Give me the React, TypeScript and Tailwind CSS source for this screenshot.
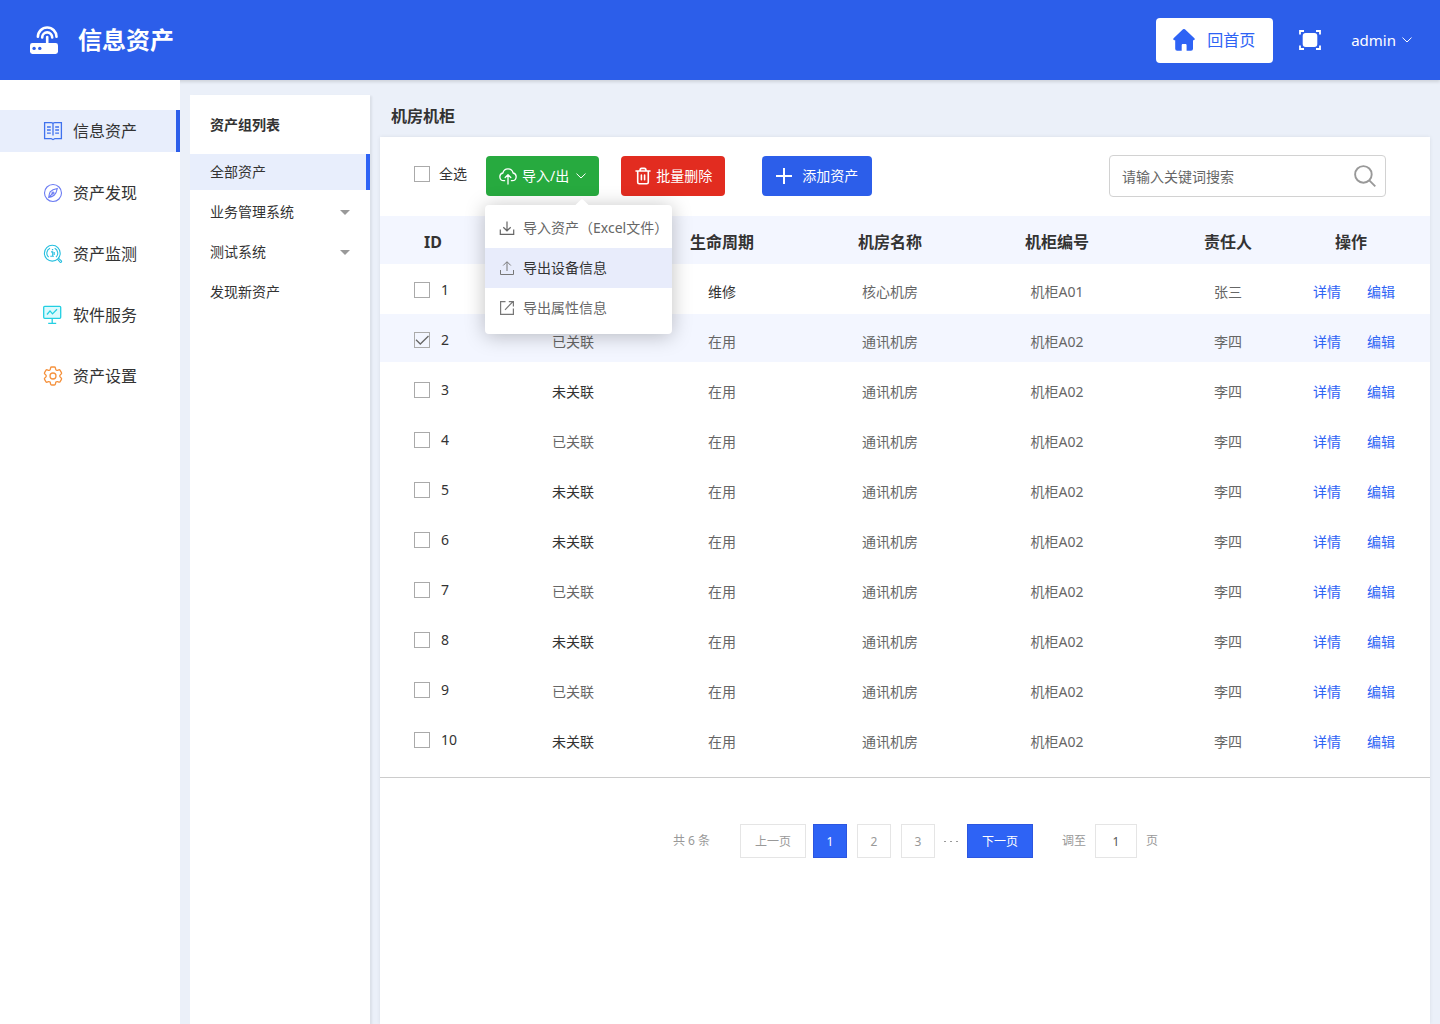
import { useState } from 'react'
import { HiOutlineCog6Tooth } from 'react-icons/hi2'

const menus = [
  { name: '信息资产', icon: BookIcon },
  { name: '资产发现', icon: CompassIcon },
  { name: '资产监测', icon: MonitorSearchIcon },
  { name: '软件服务', icon: ScreenIcon },
  { name: '资产设置', icon: GearIcon },
]

const groups = [
  { name: '全部资产', children: false },
  { name: '业务管理系统', children: true },
  { name: '测试系统', children: true },
  { name: '发现新资产', children: false },
]

const rows = [
  { id: 1, link: '', state: '维修', room: '核心机房', cabinet: '机柜A01', owner: '张三' },
  { id: 2, link: '已关联', state: '在用', room: '通讯机房', cabinet: '机柜A02', owner: '李四' },
  { id: 3, link: '未关联', state: '在用', room: '通讯机房', cabinet: '机柜A02', owner: '李四' },
  { id: 4, link: '已关联', state: '在用', room: '通讯机房', cabinet: '机柜A02', owner: '李四' },
  { id: 5, link: '未关联', state: '在用', room: '通讯机房', cabinet: '机柜A02', owner: '李四' },
  { id: 6, link: '未关联', state: '在用', room: '通讯机房', cabinet: '机柜A02', owner: '李四' },
  { id: 7, link: '已关联', state: '在用', room: '通讯机房', cabinet: '机柜A02', owner: '李四' },
  { id: 8, link: '未关联', state: '在用', room: '通讯机房', cabinet: '机柜A02', owner: '李四' },
  { id: 9, link: '已关联', state: '在用', room: '通讯机房', cabinet: '机柜A02', owner: '李四' },
  { id: 10, link: '未关联', state: '在用', room: '通讯机房', cabinet: '机柜A02', owner: '李四' },
]

function RouterLogo() {
  return (
    <svg className="w-7 h-7" viewBox="0 0 28 28" fill="none" stroke="#fff" strokeWidth="2.6" strokeLinecap="round">
      <path d="M7.900 10.800a9.300 9.300 0 1 1 18.600 0" />
      <path d="M12.200 11.400a5 5 0 1 1 10 0" />
      <path d="M17.200 11v7" />
      <rect x="0" y="17" width="28" height="11" rx="2.400" fill="#fff" stroke="none" />
      <circle cx="4.100" cy="22.400" r="1.700" fill="#2c5eea" stroke="none" />
      <circle cx="9.800" cy="22.400" r="1.700" fill="#2c5eea" stroke="none" />
    </svg>
  )
}

function HomeIcon() {
  return (
    <svg className="w-[22px] h-[22px]" viewBox="0 0 22 22" fill="#2e63f5">
      <path d="M9.700.5a1.900 1.900 0 0 1 2.500 0l9.200 8.700c.8.8.3 2-.8 2H20v8.600a2 2 0 0 1-2 2h-4.400v-5.600c0-.7-.5-1.200-1.200-1.200h-2.500c-.7 0-1.200.5-1.200 1.200v5.600H4.200a2 2 0 0 1-2-2v-8.600h-.8c-1.100 0-1.600-1.200-.8-2z" />
    </svg>
  )
}

function FullscreenIcon() {
  return (
    <svg className="w-[22px] h-5" viewBox="0 0 22 20" fill="none" stroke="#fff" strokeWidth="1.800">
      <path d="M1 4.500V1h4M17 1h4v3.500M21 15.500V19h-4M5 19H1v-3.500" />
      <rect x="3.700" y="3" width="14.600" height="14" rx="3" fill="#fff" stroke="none" />
    </svg>
  )
}

function BookIcon() {
  return (
    <svg className="w-5 h-5" viewBox="0 0 20 20" fill="none" stroke="#3f72ee" strokeWidth="1.300">
      <path d="M1.600 1.700h6.700c1 0 1.700.4 1.700 1.200 0-.8.700-1.200 1.700-1.200h6.700v16h-6.500c-.9 0-1.400.9-1.900.9s-1-.9-1.900-.9H1.600z" />
      <path d="M10 2.900v11.500M4 6h3.800M4 9h3.800M4 12.200h3.800M12.200 6H16M12.200 9H16M12.200 12.200H16" />
    </svg>
  )
}

function CompassIcon() {
  return (
    <svg className="w-5 h-5" viewBox="0 0 20 20" fill="none" stroke="#6b7cf3" strokeWidth="1.100">
      <circle cx="10" cy="10" r="8.500" />
      <path d="M14.300 5.500c-3 .5-5.600 1.600-7.200 3.400-.7 1.500-1.200 3.300-1.400 5.600 2.300-.4 4-1.100 5.400-2.200 1.600-1.600 2.700-3.900 3.200-6.800zM5.700 14.500l4-4.100" />
      <circle cx="10" cy="10" r="1" />
    </svg>
  )
}

function MonitorSearchIcon() {
  return (
    <svg className="w-5 h-5" viewBox="0 0 20 20" fill="none" stroke="#27bfdf" strokeWidth="1.100">
      <circle cx="9.300" cy="9.200" r="7.900" />
      <path d="M7 4.200a5.400 5.400 0 0 0-1.300 9M11.700 4.300a5.400 5.400 0 0 1 1.300 8.800" />
      <path d="M8.900 5.600h1.300M8 7.900h1.700v4.200M7.300 12.300h3.600M11.200 8v3" />
      <path d="m14.400 15.200 2.700 3c.9.7 2-.4 1.300-1.300l-3-2.700" />
    </svg>
  )
}

function ScreenIcon() {
  return (
    <svg className="w-5 h-5" viewBox="0 0 20 20" fill="none" stroke="#22cfe2" strokeWidth="1.300">
      <rect x="0.700" y="1.300" width="17" height="12" rx="1" fill="#dcfafd" />
      <path d="M4 9.500l3-3.600 2.500 3 4.500-4.600M9.200 13.300v5M5.200 18.400h8" />
    </svg>
  )
}

function GearIcon() {
  return <HiOutlineCog6Tooth className="w-6 h-6 -m-0.5 text-[#f5923e]" strokeWidth={1.3} />
}

function CloudUploadIcon() {
  return (
    <svg className="w-[18px] h-[18px]" viewBox="0 0 18 18" fill="none" stroke="#fff" strokeWidth="1.300" strokeLinecap="round" strokeLinejoin="round">
      <path d="M5.600 13.700H4.700a3.900 3.900 0 0 1-.8-7.700 5.200 5.200 0 0 1 10.200 0 3.900 3.900 0 0 1-.8 7.700h-.9" />
      <path d="M9 17V8M6.200 10.500 9 7.700l2.800 2.800" />
    </svg>
  )
}

function TrashIcon() {
  return (
    <svg className="w-4 h-[18px]" viewBox="0 0 16 18" fill="none" stroke="#fff" strokeWidth="1.600" strokeLinecap="round" strokeLinejoin="round">
      <path d="M1 4h14M5 3.800c0-1.600.6-2.400 1.600-2.400h2.800c1 0 1.600.8 1.600 2.400M2.700 4.200v11c0 .9.600 1.500 1.500 1.500h7.600c.9 0 1.500-.6 1.500-1.500v-11M6.400 8v4.800M9.600 8v4.800" />
    </svg>
  )
}

function SearchIcon() {
  return (
    <svg className="w-[22px] h-[22px]" viewBox="0 0 22 22" fill="none" stroke="#999" strokeWidth="1.900">
      <circle cx="9.400" cy="9.400" r="8.300" />
      <path d="m15.300 15.300 6 6" />
    </svg>
  )
}

function ChevronIcon() {
  return (
    <svg className="w-[10px] h-[6px]" viewBox="0 0 10 6" fill="none" stroke="currentColor">
      <path d="m.5.6 4.500 4.400L9.500.6" />
    </svg>
  )
}

function ImportIcon() {
  return (
    <svg className="w-4 h-4" viewBox="0 0 16 16" fill="none" stroke="#666" strokeWidth="1.200">
      <path d="M1.300 9.500v4.800h13.400V9.500M8 1.500v9.200M4.300 7.200 8 10.800l3.700-3.600" />
    </svg>
  )
}

function ExportIcon() {
  return (
    <svg className="w-4 h-4" viewBox="0 0 16 16" fill="none" stroke="#777" strokeWidth="1">
      <path d="M1.500 10v4.500h13V10M8 11V2M4.200 5.500 8 1.700l3.800 3.800" />
    </svg>
  )
}

function ExportAttrIcon() {
  return (
    <svg className="w-4 h-4" viewBox="0 0 16 16" fill="none" stroke="#777" strokeWidth="1.200">
      <path d="M6.500 1.600H1.600v12.800h12.800V8.500M6 9.800l8-8.200M9.800 1.600h4.600v4.900" />
    </svg>
  )
}

function Checkbox({ id, label, defaultChecked }: { id: string; label: string; defaultChecked?: boolean }) {
  return (
    <label htmlFor={id} className="inline-flex items-center text-sm leading-5 text-[#333]">
      <span className="relative w-4 h-4">
        <input
          id={id}
          type="checkbox"
          defaultChecked={defaultChecked}
          className="peer block w-4 h-4 appearance-none border border-[#aaa]"
        />
        <svg
          className="absolute inset-0 hidden w-4 h-4 pointer-events-none peer-checked:block"
          viewBox="0 0 16 16"
          fill="none"
          stroke="#666"
          strokeWidth="1.300"
        >
          <path d="m2 7.700 4.300 4.300L14.500 4" />
        </svg>
      </span>
      {label}
    </label>
  )
}

const exportOptions = [
  { name: '导入资产（Excel文件）', icon: ImportIcon },
  { name: '导出设备信息', icon: ExportIcon },
  { name: '导出属性信息', icon: ExportAttrIcon },
]

function ExportMenu() {
  const [open, setOpen] = useState(true)

  return (
    <div className="relative">
      <button
        type="button"
        onClick={() => setOpen(!open)}
        className="flex items-center h-10 px-[13px] rounded bg-[#27aa3f] text-sm text-white whitespace-nowrap"
      >
        <CloudUploadIcon />
        <span className="ml-[5px] mr-[7px]">导入/出</span>
        <ChevronIcon />
      </button>
      {open && (
        <div className="absolute z-10 left-0 top-[49px] w-[187px] -ml-px pt-[3px] pb-[6px] rounded bg-white shadow-[0_2px_20px_rgba(0,0,0,0.25)]">
          <span className="absolute left-[91px] -top-1 w-3 h-3 rotate-45 rounded-xs bg-white" />
          <ul className="relative">
            {exportOptions.map((item, i) => (
              <li key={item.name}>
                <button
                  type="button"
                  className={`flex items-center gap-2 w-full h-10 pl-[14px] text-sm whitespace-nowrap ${
                    i === 1 ? 'bg-[#e8ecfb] text-[#333]' : 'text-[#666]'
                  }`}
                >
                  <item.icon />
                  {item.name}
                </button>
              </li>
            ))}
          </ul>
        </div>
      )}
    </div>
  )
}

function Header() {
  return (
    <header className="flex items-center h-20 pl-[30px] pr-7 bg-[#2c5eea] text-white shadow-[0_2px_3px_rgba(0,0,0,0.12)]">
      <RouterLogo />
      <h1 className="ml-5 text-2xl font-bold">信息资产</h1>
      <a href="#home" className="flex items-center gap-3 h-[45px] ml-auto pl-[17px] pr-[18px] rounded bg-white text-base text-[#2e63f5]">
        <HomeIcon />
        回首页
      </a>
      <button type="button" aria-label="全屏" className="ml-[26px]">
        <FullscreenIcon />
      </button>
      <button type="button" className="flex items-center gap-[6px] ml-[30px] text-[15px]">
        admin
        <ChevronIcon />
      </button>
    </header>
  )
}

function Pagination() {
  return (
    <div className="flex items-center justify-center mt-[46px] pl-[21px] pb-10 text-xs text-[#999]">
      <span className="mr-[30px]">共 6 条</span>
      <button type="button" className="w-[66px] h-[34px] pt-px mr-[7px] border border-[#e5e5e5]">上一页</button>
      <button type="button" className="w-[34px] h-[34px] pt-px border border-[#2c56e0] bg-[#2e63f5] text-white">1</button>
      <button type="button" className="w-[34px] h-[34px] pt-px ml-[10px] border border-[#e5e5e5]">2</button>
      <button type="button" className="w-[34px] h-[34px] pt-px ml-[10px] border border-[#e5e5e5]">3</button>
      <span className="flex justify-center gap-1 w-8">
        <i className="w-[2px] h-px bg-[#999]" />
        <i className="w-[2px] h-px bg-[#999]" />
        <i className="w-[2px] h-px bg-[#999]" />
      </span>
      <button type="button" className="w-[66px] h-[34px] pt-px border border-[#2c56e0] bg-[#2e63f5] text-white">下一页</button>
      <label htmlFor="page" className="ml-[29px]">调至</label>
      <input id="page" defaultValue="1" className="w-[42px] h-[34px] mx-[9px] border border-[#e5e5e5] text-center text-[#555]" />
      <span>页</span>
    </div>
  )
}

export default function App() {
  return (
    <div className="flex flex-col min-h-screen bg-[#ebf0f9] font-['Noto_Sans','Noto_Sans_CJK_SC',sans-serif] text-[#333]">
      <Header />
      <div className="flex grow">
        <nav className="flex flex-col gap-[19px] w-[180px] shrink-0 pt-[30px] bg-white">
          {menus.map((item, i) => (
            <a
              key={item.name}
              href="#"
              className={`flex items-center gap-[10px] h-[42px] pl-[43px] text-base ${
                i === 0 ? 'bg-[#e8eefc] border-r-4 border-[#2c5eea]' : 'pt-[2px]'
              }`}
            >
              <item.icon />
              {item.name}
            </a>
          ))}
        </nav>

        <aside className="w-[180px] shrink-0 mt-[15px] ml-[10px] bg-white shadow-[2px_1px_2px_rgba(0,0,0,0.07)]">
          <h2 className="h-[59px] pl-5 text-sm leading-[59px] font-bold">资产组列表</h2>
          <ul className="flex flex-col gap-1">
            {groups.map((group, i) => (
              <li key={group.name}>
                <a
                  href="#"
                  className={`flex items-center justify-between h-9 pl-5 text-sm ${
                    i === 0 ? 'bg-[#e8eefc] border-r-4 border-[#2e63f5]' : 'pr-5'
                  }`}
                >
                  {group.name}
                  {group.children && (
                    <svg className="w-[10px] h-[5px]" viewBox="0 0 10 5" fill="#999">
                      <path d="M0 0h10L5 5z" />
                    </svg>
                  )}
                </a>
              </li>
            ))}
          </ul>
        </aside>

        <main className="flex flex-col grow min-w-0 pt-4 px-[10px]">
          <h2 className="pl-[11px] pb-px text-base leading-10 font-bold">机房机柜</h2>
          <section className="grow bg-white shadow-[0_0_4px_rgba(0,0,0,0.08)]">
            <div className="flex items-center h-[78px] mb-px pl-[34px] pr-11">
              <div className="mr-[19px] [&_label]:gap-[9px]">
                <Checkbox id="all" label="全选" />
              </div>
              <ExportMenu />
              <button type="button" className="flex items-center gap-[5px] h-10 ml-[22px] pl-[14px] pr-[13px] rounded bg-[#e22c20] text-sm text-white whitespace-nowrap">
                <TrashIcon />
                批量删除
              </button>
              <button type="button" className="flex items-center gap-[10px] h-10 ml-[37px] px-[14px] rounded bg-[#2c5eea] text-sm text-white whitespace-nowrap">
                <svg className="w-4 h-4" viewBox="0 0 16 16" stroke="#fff" strokeWidth="2">
                  <path d="M8 0v16M0 8h16" />
                </svg>
                添加资产
              </button>
              <div className="relative ml-auto">
                <input
                  type="search"
                  aria-label="搜索"
                  placeholder="请输入关键词搜索"
                  className="w-[277px] h-[42px] pl-3 pr-10 border border-[#d2d2d2] rounded text-sm placeholder:text-[#666]"
                />
                <button type="button" aria-label="查询" className="absolute right-[10px] top-[10px]">
                  <SearchIcon />
                </button>
              </div>
            </div>

            <div className="pb-[13px] border-b border-[#ccc]">
              <table className="w-full table-fixed border-separate border-spacing-0 text-sm text-center text-[#666]">
                <colgroup>
                  <col className="w-[131px]" />
                  <col className="w-[124px]" />
                  <col className="w-[174px]" />
                  <col className="w-[162px]" />
                  <col className="w-[172px]" />
                  <col className="w-[170px]" />
                  <col className="w-[117px]" />
                </colgroup>
                <thead>
                  <tr className="h-12 bg-[#f3f6ff] text-base text-[#333] [&>th]:pt-[3px]">
                    <th className="pl-11 text-left">ID</th>
                    <th />
                    <th>生命周期</th>
                    <th>机房名称</th>
                    <th>机柜编号</th>
                    <th>责任人</th>
                    <th className="pl-[22px] text-left">操作</th>
                  </tr>
                </thead>
                <tbody>
                  {rows.map(row => (
                    <tr
                      key={row.id}
                      className={`h-[50px] [&>td]:pt-[7px] [&>td]:border-b-2 [&>td]:border-white ${
                        row.id === 2 ? 'bg-[#f3f6ff]' : ''
                      }`}
                    >
                      <td className="pl-[34px] text-left [&_label]:gap-[11px]">
                        <Checkbox id={`row-${row.id}`} label={String(row.id)} defaultChecked={row.id === 2} />
                      </td>
                      <td className={row.link === '未关联' ? 'text-[#333]' : ''}>{row.link}</td>
                      <td className={row.state === '维修' ? 'text-[#333]' : ''}>{row.state}</td>
                      <td>{row.room}</td>
                      <td>{row.cabinet}</td>
                      <td>{row.owner}</td>
                      <td className="text-left whitespace-nowrap text-[#2e63f5]">
                        <a href="#detail">详情</a>
                        <a href="#edit" className="ml-[26px]">编辑</a>
                      </td>
                    </tr>
                  ))}
                </tbody>
              </table>
            </div>

            <Pagination />
          </section>
        </main>
      </div>
    </div>
  )
}
